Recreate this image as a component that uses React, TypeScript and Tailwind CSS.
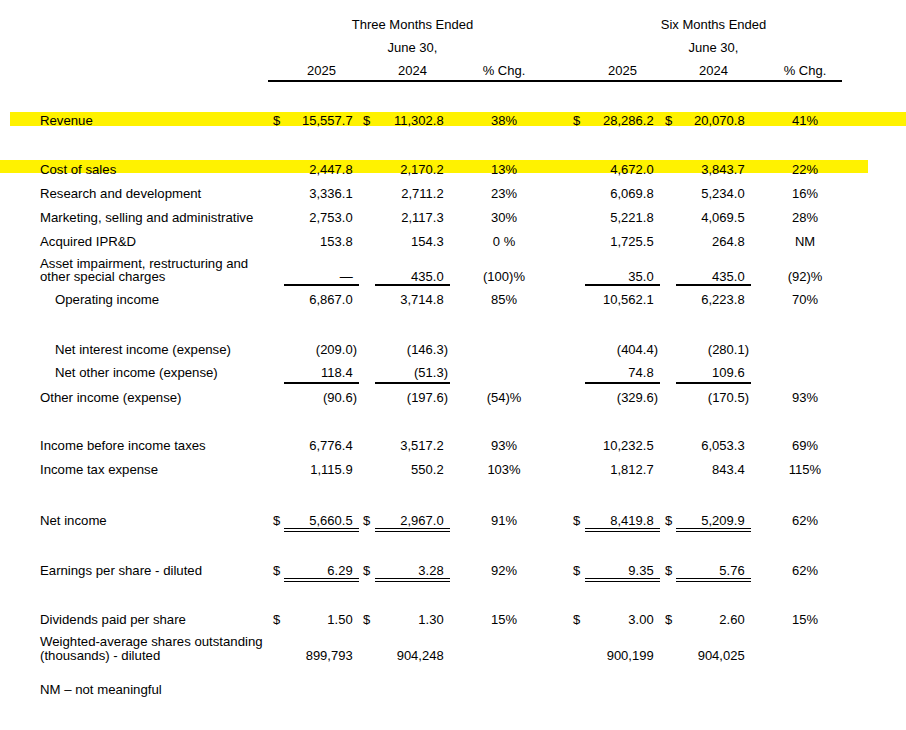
import React from 'react'

const grid =
  'grid grid-cols-[268px_16px_75px_16px_75px_108px_27px_75px_16px_75px_108px_1fr]'

type Vals = [string?, string?, string?, string?, string?, string?]

// numbers without a closing paren keep its width so they line up with negatives
function Num({ v }: { v?: string }) {
  if (!v) return null
  const neg = v.endsWith(')')
  return (
    <>
      {v}
      {!neg && <span className="invisible">)</span>}
    </>
  )
}

interface RowProps {
  label: React.ReactNode
  indent?: boolean
  dollar?: boolean
  vals: Vals
  line?: 'none' | 'single' | 'double'
  className?: string
  pad?: string
  band?: string
}

function Val({ v, line, pad }: { v?: string; line: string; pad: string }) {
  if (line === 'double') {
    return (
      <div className="relative flex flex-col">
        <div className="h-[16px] text-right pr-[2px] whitespace-nowrap">
          <Num v={v} />
        </div>
        <div className="h-[4px] border-y border-black" />
      </div>
    )
  }
  return (
    <div
      className={`relative text-right pr-[2px] whitespace-nowrap ${pad} ${
        line === 'single' ? 'border-b-2 border-black' : ''
      }`}
    >
      <Num v={v} />
    </div>
  )
}

function Row({
  label,
  indent,
  dollar,
  vals,
  line = 'none',
  className = 'leading-[24px]',
  pad = '',
  band,
}: RowProps) {
  return (
    <div className={`relative ${grid} items-start ${className}`}>
      {band && <div className={`absolute bg-[#fff200] ${band}`} />}
      <div
        className={`relative whitespace-nowrap text-[13.2px] ${indent ? 'pl-[55px]' : 'pl-[40px]'}`}
      >
        {label}
      </div>
      <div className={`relative pl-[5px] ${pad}`}>{dollar && '$'}</div>
      <Val v={vals[0]} line={line} pad={pad} />
      <div className={`relative pl-[4px] ${pad}`}>{dollar && '$'}</div>
      <Val v={vals[1]} line={line} pad={pad} />
      <div className={`relative text-center whitespace-nowrap ${pad}`}>{vals[2]}</div>
      <div className={`relative pl-[15px] ${pad}`}>{dollar && '$'}</div>
      <Val v={vals[3]} line={line} pad={pad} />
      <div className={`relative pl-[5px] ${pad}`}>{dollar && '$'}</div>
      <Val v={vals[4]} line={line} pad={pad} />
      <div className={`relative text-center whitespace-nowrap ${pad}`}>{vals[5]}</div>
      <div />
    </div>
  )
}

export default function App() {
  return (
    <div className="w-[906px] min-h-[730px] bg-white text-black text-[13px] font-['Liberation_Sans',Arial,sans-serif] overflow-hidden">
      {/* column headings */}
      <div className="pt-[13px]">
        <div className={`${grid} leading-[23px]`}>
          <div className="col-start-5 flex justify-center whitespace-nowrap">Three Months Ended</div>
          <div className="col-start-10 flex justify-center whitespace-nowrap">Six Months Ended</div>
        </div>
        <div className={`${grid} leading-[23px]`}>
          <div className="col-start-5 flex justify-center whitespace-nowrap">June 30,</div>
          <div className="col-start-10 flex justify-center whitespace-nowrap">June 30,</div>
        </div>
        <div className={`${grid} h-[21px] leading-[24px]`}>
          <div className="col-start-3 text-center">2025</div>
          <div className="col-start-5 text-center">2024</div>
          <div className="col-start-6 text-center">% Chg.</div>
          <div className="col-start-8 text-center">2025</div>
          <div className="col-start-10 text-center">2024</div>
          <div className="col-start-11 text-center">% Chg.</div>
        </div>
        <div className="ml-[268px] w-[574px] h-[2px] bg-black" />
      </div>

      <Row
        className="mt-[27px] leading-[24px]"
        band="left-[10px] right-0 top-[3px] h-[14px]"
        label="Revenue"
        dollar
        vals={['15,557.7', '11,302.8', '38%', '28,286.2', '20,070.8', '41%']}
      />
      <Row
        className="mt-[25px] leading-[24px]"
        band="left-0 w-[868px] top-[2px] h-[13px]"
        label="Cost of sales"
        vals={['2,447.8', '2,170.2', '13%', '4,672.0', '3,843.7', '22%']}
      />
      <Row
        label="Research and development"
        vals={['3,336.1', '2,711.2', '23%', '6,069.8', '5,234.0', '16%']}
      />
      <Row
        label="Marketing, selling and administrative"
        vals={['2,753.0', '2,117.3', '30%', '5,221.8', '4,069.5', '28%']}
      />
      <Row
        label="Acquired IPR&D"
        vals={['153.8', '154.3', '0 %', '1,725.5', '264.8', 'NM']}
      />
      <Row
        className="mt-[3px] leading-[13px]"
        pad="pt-[13px] pb-[1px]"
        line="single"
        label={
          <>
            Asset impairment, restructuring and
            <br />
            other special charges
          </>
        }
        vals={['—', '435.0', '(100)%', '35.0', '435.0', '(92)%']}
      />
      <Row
        className="mt-[2px] leading-[24px]"
        indent
        label="Operating income"
        vals={['6,867.0', '3,714.8', '85%', '10,562.1', '6,223.8', '70%']}
      />

      <Row
        className="mt-[26px] leading-[24px]"
        indent
        label="Net interest income (expense)"
        vals={['(209.0)', '(146.3)', '', '(404.4)', '(280.1)', '']}
      />
      <Row
        className="mt-[1px] leading-[19px]"
        indent
        line="single"
        label="Net other income (expense)"
        vals={['118.4', '(51.3)', '', '74.8', '109.6', '']}
      />
      <Row
        className="mt-[2px] leading-[24px]"
        label="Other income (expense)"
        vals={['(90.6)', '(197.6)', '(54)%', '(329.6)', '(170.5)', '93%']}
      />

      <Row
        className="mt-[24px] leading-[24px]"
        label="Income before income taxes"
        vals={['6,776.4', '3,517.2', '93%', '10,232.5', '6,053.3', '69%']}
      />
      <Row
        label="Income tax expense"
        vals={['1,115.9', '550.2', '103%', '1,812.7', '843.4', '115%']}
      />

      <Row
        className="mt-[30px] leading-[18px]"
        line="double"
        dollar
        label="Net income"
        vals={['5,660.5', '2,967.0', '91%', '8,419.8', '5,209.9', '62%']}
      />
      <Row
        className="mt-[30px] leading-[18px]"
        line="double"
        dollar
        label="Earnings per share - diluted"
        vals={['6.29', '3.28', '92%', '9.35', '5.76', '62%']}
      />

      <Row
        className="mt-[26px] leading-[24px]"
        dollar
        label="Dividends paid per share"
        vals={['1.50', '1.30', '15%', '3.00', '2.60', '15%']}
      />
      <Row
        className="mt-[3px] leading-[14px]"
        pad="pt-[14px]"
        label={
          <>
            Weighted-average shares outstanding
            <br />
            (thousands) - diluted
          </>
        }
        vals={['899,793', '904,248', '', '900,199', '904,025', '']}
      />

      <div className="mt-[15px] pl-[40px] leading-[24px] text-[13.2px]">NM – not meaningful</div>
    </div>
  )
}
